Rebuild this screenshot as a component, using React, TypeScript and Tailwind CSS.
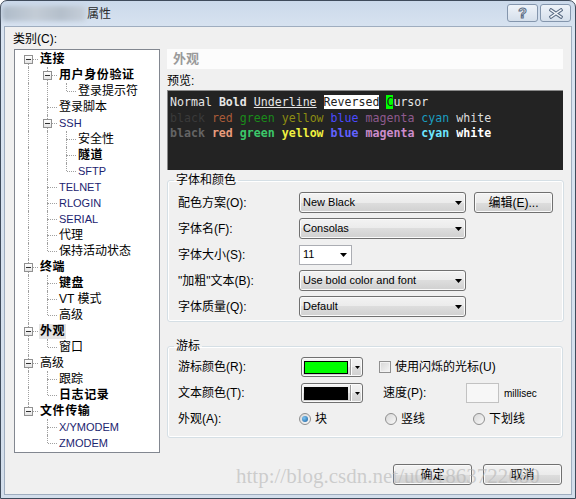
import React from "react";

type TreeNode = {
  label: string;
  bold?: boolean;
  latin?: boolean;
  selected?: boolean;
  children?: TreeNode[];
};

type Row = {
  node: TreeNode;
  level: number;
  isFirst: boolean;
  isLast: boolean;
  guides: boolean[];
};

const TREE: TreeNode[] = [
  {
    label: "连接",
    bold: true,
    children: [
      { label: "用户身份验证", bold: true, children: [{ label: "登录提示符" }] },
      { label: "登录脚本" },
      {
        label: "SSH",
        latin: true,
        children: [
          { label: "安全性" },
          { label: "隧道", bold: true },
          { label: "SFTP", latin: true },
        ],
      },
      { label: "TELNET", latin: true },
      { label: "RLOGIN", latin: true },
      { label: "SERIAL", latin: true },
      { label: "代理" },
      { label: "保持活动状态" },
    ],
  },
  {
    label: "终端",
    bold: true,
    children: [{ label: "键盘", bold: true }, { label: "VT 模式" }, { label: "高级" }],
  },
  { label: "外观", bold: true, selected: true, children: [{ label: "窗口" }] },
  { label: "高级", children: [{ label: "跟踪" }, { label: "日志记录", bold: true }] },
  {
    label: "文件传输",
    bold: true,
    children: [
      { label: "X/YMODEM", latin: true },
      { label: "ZMODEM", latin: true },
    ],
  },
];

function flatten(nodes: TreeNode[], level: number, guides: boolean[], out: Row[]) {
  nodes.forEach((node, i) => {
    const isLast = i === nodes.length - 1;
    out.push({ node, level, isFirst: i === 0, isLast, guides });
    if (node.children) flatten(node.children, level + 1, [...guides, !isLast], out);
  });
  return out;
}

const ROWS = flatten(TREE, 0, [], []);

function Caret({ w = 7, h = 4 }: { w?: number; h?: number }) {
  return (
    <svg width={w} height={h} viewBox={`0 0 ${w} ${h}`} className="shrink-0">
      <path d={`M0 0H${w}L${w / 2} ${h}Z`} fill="#000" />
    </svg>
  );
}

function TreeRow({ row }: { row: Row }) {
  const { node, level, isFirst, isLast, guides } = row;
  return (
    <div className="flex h-[16px] items-center">
      <div className="w-[4px] shrink-0" />
      {guides.map((g, i) => (
        <div key={i} className="relative h-[16px] w-[19px] shrink-0">
          {g && <span className="absolute left-[9px] top-0 h-[16px] border-l border-dotted border-[#a0a0a0]" />}
        </div>
      ))}
      <div className="relative h-[16px] w-[19px] shrink-0">
        {!(isFirst && level === 0) && (
          <span className="absolute left-[9px] top-0 h-[8px] border-l border-dotted border-[#a0a0a0]" />
        )}
        {!isLast && (
          <span className="absolute left-[9px] top-[8px] h-[8px] border-l border-dotted border-[#a0a0a0]" />
        )}
        <span className="absolute left-[10px] top-[8px] w-[9px] border-t border-dotted border-[#a0a0a0]" />
        {node.children && (
          <span className="absolute left-[5px] top-[4px] flex h-[9px] w-[9px] items-center justify-center border border-[#919191] bg-[linear-gradient(#ffffff,#e4e4e4)]">
            <span className="h-[1px] w-[5px] bg-[#303030]" />
          </span>
        )}
      </div>
      <span
        className={`ml-[1px] whitespace-nowrap px-[1px] leading-[15px] ${
          node.latin ? "text-[11px] text-[#1c2470]" : "text-[12px] text-black"
        } ${node.bold ? "font-bold tracking-[0.6px]" : ""} ${node.selected ? "bg-[#e4e4e4]" : ""}`}
      >
        {node.label}
      </span>
    </div>
  );
}

function Dropdown({ value }: { value: string }) {
  return (
    <div className="flex h-[21px] w-[167px] items-center justify-between rounded-[3px] border border-[#707070] bg-[linear-gradient(#f3f3f3_0%,#ebebeb_50%,#dddddd_50%,#d0d0d0_100%)] pl-[3px] pr-[3px] text-[11px] shadow-[inset_0_0_0_1px_#fafafa]">
      <span>{value}</span>
      <Caret />
    </div>
  );
}

function Button({ children, className = "" }: { children: React.ReactNode; className?: string }) {
  return (
    <div
      className={`flex h-[21px] w-[79px] items-center justify-center rounded-[3px] border border-[#707070] bg-[linear-gradient(#f3f3f3_0%,#ebebeb_50%,#dddddd_50%,#d0d0d0_100%)] text-[12px] shadow-[inset_0_0_0_1px_#fafafa] ${className}`}
    >
      {children}
    </div>
  );
}

function ColorButton({ color }: { color: string }) {
  return (
    <div className="ml-[2px] flex h-[20px] w-[62px] items-center rounded-[3px] border border-[#707070] bg-[linear-gradient(#f3f3f3_0%,#ebebeb_50%,#dddddd_50%,#d0d0d0_100%)] shadow-[inset_0_0_0_1px_#fafafa]">
      <span className={`ml-[2px] h-[13px] w-[44px] border border-black ${color}`} />
      <span className="ml-[2px] h-[16px] border-l border-[#9a9a9a]" />
      <span className="h-[16px] border-l border-[#ffffff]" />
      <span className="ml-[3px]">
        <Caret w={5} h={3} />
      </span>
    </div>
  );
}

function Radio({ checked }: { checked?: boolean }) {
  return (
    <span className="flex h-[12px] w-[12px] shrink-0 items-center justify-center rounded-full border border-[#8f8f8f] bg-[linear-gradient(135deg,#d8d8d8,#f8f8f8)]">
      {checked && (
        <span className="h-[6px] w-[6px] rounded-full bg-[radial-gradient(circle_at_35%_35%,#7cc4f2,#1a5f9e)]" />
      )}
    </span>
  );
}

function GroupBox({ title, children, className = "" }: { title: string; children: React.ReactNode; className?: string }) {
  return (
    <fieldset className={`rounded-[3px] border border-[#d5dfe5] shadow-[inset_0_0_0_1px_#ffffff] ${className}`}>
      <legend className="-ml-[4px] px-[2px] text-[12px] leading-[16px]">{title}</legend>
      {children}
    </fieldset>
  );
}

export default function App() {
  return (
    <div className="h-[499px] w-[576px] font-['Liberation_Sans','Noto_Sans_CJK_SC',sans-serif] text-black">
      <div className="flex h-full w-full flex-col rounded-t-[7px] border border-[#3f4b5b] bg-[linear-gradient(#cbd9ea,#d9e4f1_30px,#d3deeb)]">
        {/* Title bar */}
        <div className="flex h-[25px] shrink-0 items-start">
          <div className="mt-[5px] ml-[1px] h-[15px] w-[84px] rounded-[4px] bg-[linear-gradient(90deg,#aebbc9,#c3ccd6_40%,#b4bfcb_70%,#c6cfda)] blur-[2px]" />
          <span className="mt-[5px] ml-[1px] text-[12px] leading-[16px] text-[#2a2a2a]">属性</span>
          <div className="ml-auto mr-[4px] mt-[3px] flex gap-[2px]">
            <div className="flex h-[18px] w-[31px] items-center justify-center rounded-[3px] border border-[#8496ad] bg-[linear-gradient(#eef3f9,#d5dfeb)] text-[14px] font-bold leading-none text-[#f7f9fc] [-webkit-text-stroke:1px_#5b6d85]">
              ?
            </div>
            <div className="flex h-[18px] w-[31px] items-center justify-center rounded-[3px] border border-[#8496ad] bg-[linear-gradient(#eef3f9,#d5dfeb)]">
              <svg width="14" height="11" viewBox="0 0 14 11">
                <path d="M2 2L12 9M12 2L2 9" stroke="#5b6d85" strokeWidth="3.4" strokeLinecap="square" />
                <path d="M2 2L12 9M12 2L2 9" stroke="#f7f9fc" strokeWidth="1.4" strokeLinecap="square" />
              </svg>
            </div>
          </div>
        </div>

        {/* Client area */}
        <div className="relative mx-[3px] mb-[3px] flex-1 border border-[#9fadbf] bg-[#f0f0f0] pl-[8px] pt-[3px]">
          <div className="h-[19px] text-[12px] leading-[19px]">类别(C):</div>
          <div className="flex gap-[7px]">
            {/* Tree */}
            <div className="ml-[1px] h-[404px] w-[146px] shrink-0 border border-[#828790] bg-white pt-[1px]">
              {ROWS.map((r, i) => (
                <TreeRow key={i} row={r} />
              ))}
            </div>

            {/* Right panel */}
            <div className="flex w-[396px] flex-col">
              <div className="flex h-[20px] items-center bg-[#fcfcfc] pl-[6px] text-[13px] font-bold text-[#9a9a9a]">
                外观
              </div>
              <div className="h-[21px] pt-[4px] text-[12px] leading-[16px]">预览:</div>
              <div className="h-[80px] border-t border-l border-[#8a8a8a] bg-[#232323] pl-[2px] pt-[4px] font-['DejaVu_Sans_Mono',monospace] text-[11.6px] leading-[15.5px] whitespace-pre text-[#e6e6e6]">
                <div>
                  Normal <span className="font-bold">Bold</span> <span className="underline">Underline</span>{" "}
                  <span className="bg-white text-[#222]">Reversed</span> <span className="bg-[#00ff00] text-[#222]">C</span>ursor
                </div>
                <div>
                  <span className="text-[#3a3a3a]">black</span> <span className="text-[#a85a38]">red</span>{" "}
                  <span className="text-[#1a8a1a]">green</span> <span className="text-[#8c8c12]">yellow</span>{" "}
                  <span className="text-[#4a4aff]">blue</span> <span className="text-[#8e5a8e]">magenta</span>{" "}
                  <span className="text-[#1a9ec0]">cyan</span> <span className="text-[#dedede]">white</span>
                </div>
                <div className="font-bold">
                  <span className="text-[#646464]">black</span> <span className="text-[#e89c7c]">red</span>{" "}
                  <span className="text-[#3cc86a]">green</span> <span className="text-[#f0f040]">yellow</span>{" "}
                  <span className="text-[#6262ff]">blue</span> <span className="text-[#cc8ccc]">magenta</span>{" "}
                  <span className="text-[#6ee6ff]">cyan</span> <span className="text-white">white</span>
                </div>
              </div>

              <GroupBox title="字体和颜色" className="mt-[2px] px-[10px] pt-[4px] pb-[4px]">
                <div className="flex flex-col gap-[5px] text-[12px]">
                  <div className="flex h-[21px] items-center">
                    <span className="w-[121px]">配色方案(O):</span>
                    <Dropdown value="New Black" />
                    <Button className="ml-[8px]">编辑(E)...</Button>
                  </div>
                  <div className="flex h-[21px] items-center">
                    <span className="w-[121px]">字体名(F):</span>
                    <Dropdown value="Consolas" />
                  </div>
                  <div className="flex h-[21px] items-center">
                    <span className="w-[121px]">字体大小(S):</span>
                    <div className="flex h-[20px] w-[53px] items-center justify-between border border-[#abadb3] bg-white pl-[3px] pr-[4px] text-[11px]">
                      <span>11</span>
                      <Caret />
                    </div>
                  </div>
                  <div className="flex h-[21px] items-center">
                    <span className="w-[121px]">"加粗"文本(B):</span>
                    <Dropdown value="Use bold color and font" />
                  </div>
                  <div className="flex h-[21px] items-center">
                    <span className="w-[121px]">字体质量(Q):</span>
                    <Dropdown value="Default" />
                  </div>
                </div>
              </GroupBox>

              <GroupBox title="游标" className="mt-[16px] px-[10px] pt-[3px] pb-[8px]">
                <div className="flex flex-col gap-[6px] text-[12px]">
                  <div className="flex h-[20px] items-center">
                    <span className="w-[121px]">游标颜色(R):</span>
                    <ColorButton color="bg-[#00ff00]" />
                    <span className="ml-[16px] h-[12px] w-[12px] border border-[#8f8f8f] bg-[linear-gradient(135deg,#d6d6d6,#f6f6f6)] shadow-[inset_0_0_0_1px_#f2f2f2]" />
                    <span className="ml-[4px]">使用闪烁的光标(U)</span>
                  </div>
                  <div className="flex h-[20px] items-center">
                    <span className="w-[121px]">文本颜色(T):</span>
                    <ColorButton color="bg-black" />
                    <span className="ml-[20px] w-[83px]">速度(P):</span>
                    <span className="h-[20px] w-[33px] border border-[#c2c2c2] bg-[#f7f7f7]" />
                    <span className="ml-[5px] text-[10px]">millisec</span>
                  </div>
                  <div className="flex h-[20px] items-center">
                    <span className="w-[121px]">外观(A):</span>
                    <div className="flex w-[86px] items-center gap-[4px]">
                      <Radio checked />
                      <span>块</span>
                    </div>
                    <div className="flex w-[88px] items-center gap-[4px]">
                      <Radio />
                      <span>竖线</span>
                    </div>
                    <div className="flex items-center gap-[4px]">
                      <Radio />
                      <span>下划线</span>
                    </div>
                  </div>
                </div>
              </GroupBox>

              <div className="mt-[26px] flex justify-end gap-[11px] pr-[1px]">
                <Button>确定</Button>
                <Button>取消</Button>
              </div>
            </div>
          </div>

          {/* Watermark */}
          <div className="pointer-events-none absolute left-[231px] top-[437px] whitespace-nowrap font-['Liberation_Serif',serif] text-[21px] leading-[24px] text-[#b4b4b4]/60">
            http://blog.csdn.net/u011863722680
          </div>
        </div>
      </div>
    </div>
  );
}
